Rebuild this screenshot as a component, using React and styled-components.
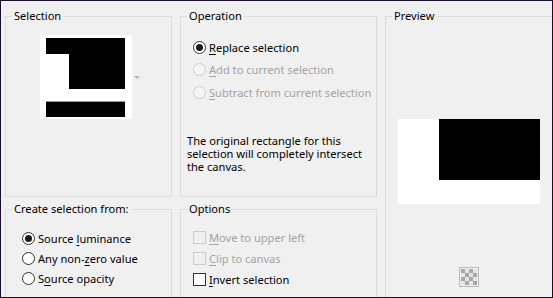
import React from "react";
import styled, { createGlobalStyle } from "styled-components";

const GlobalStyle = createGlobalStyle`
  body {
    margin: 0;
    background: #f0f0f0;
    font-family: "Noto Sans", "Open Sans", sans-serif;
    font-size: 11.1px;
    color: #000;
  }
`;

const Dialog = styled.div`
  width: 553px;
  height: 298px;
  box-sizing: border-box;
  border: 1px solid #1b0e2a;
  background: #f0f0f0;
  overflow: hidden;
  display: grid;
  grid-template-columns: 167px 197px 168px;
  grid-template-rows: 189px 120px;
  column-gap: 8px;
  row-gap: 4px;
  padding: 7px 0 0 4px;
`;

const Group = styled.fieldset`
  margin: 0;
  padding: 0;
  min-width: 0;
  border: 1px solid #dcdcdc;
  box-sizing: border-box;
  grid-column: ${(p) => p.$col};
  grid-row: ${(p) => p.$row};

  legend {
    margin-left: 6px;
    padding: 0 2px;
    line-height: 16px;
    font-size: 11.1px;
  }
`;

const Body = styled.div`
  padding: ${(p) => p.$pad};
`;

const Thumb = styled.div`
  display: flex;
  align-items: center;
  gap: 2px;
`;

const DropArrow = styled.span`
  width: 0;
  height: 0;
  border-left: 3px solid transparent;
  border-right: 3px solid transparent;
  border-top: 3px solid #b4b4b4;
  margin-top: 1px;
`;

const Row = styled.label`
  display: flex;
  align-items: center;
  height: ${(p) => p.$h || 22}px;
  gap: 3px;
  color: ${(p) => (p.$disabled ? "#a3a3a3" : "#000")};
  white-space: nowrap;

  u {
    text-decoration-thickness: 1px;
    text-underline-offset: 2px;
  }
`;

const Radio = styled.span`
  width: 13px;
  height: 13px;
  box-sizing: border-box;
  border-radius: 50%;
  border: 1px solid ${(p) => (p.$disabled ? "#cccccc" : "#333333")};
  background: ${(p) => (p.$disabled ? "#f4f4f4" : "#ffffff")};
  display: flex;
  align-items: center;
  justify-content: center;
  flex: none;

  &::after {
    content: "";
    display: ${(p) => (p.$checked ? "block" : "none")};
    width: 7px;
    height: 7px;
    border-radius: 50%;
    background: #1a1a1a;
  }
`;

const Check = styled.span`
  width: 13px;
  height: 13px;
  box-sizing: border-box;
  border: 1px solid ${(p) => (p.$disabled ? "#cccccc" : "#333333")};
  background: ${(p) => (p.$disabled ? "#f0f0f0" : "#ffffff")};
  flex: none;
`;

const Note = styled.p`
  margin: 30px 0 0 -6px;
  width: 180px;
  line-height: 13px;
`;

const PreviewBox = styled.div`
  display: flex;
  flex-direction: column;
  align-items: center;
`;

const CheckerButton = styled.div`
  margin-top: 63px;
  width: 20px;
  height: 20px;
  box-sizing: border-box;
  border: 1px solid #b8b8b8;
  background: #f0f0f0;
  display: grid;
  grid-template-columns: repeat(4, 4px);
  grid-template-rows: repeat(4, 4px);
  justify-content: center;
  align-content: center;
`;

const Cell = styled.span`
  background: ${(p) => (p.$dark ? "#a8a8a8" : "#e4e4e4")};
`;

const options = [
  { key: "replace", u: "R", post: "eplace selection", checked: true },
  { key: "add", u: "A", post: "dd to current selection", disabled: true },
  { key: "sub", u: "S", post: "ubtract from current selection", disabled: true },
];

const sources = [
  { key: "lum", pre: "Source ", u: "l", post: "uminance", checked: true },
  { key: "nz", pre: "Any non-", u: "z", post: "ero value" },
  { key: "op", pre: "S", u: "o", post: "urce opacity" },
];

const checks = [
  { key: "move", u: "M", post: "ove to upper left", disabled: true },
  { key: "clip", u: "C", post: "lip to canvas", disabled: true },
  { key: "inv", u: "I", post: "nvert selection" },
];

export default function App() {
  return (
    <>
      <GlobalStyle />
      <Dialog>
        <Group $col="1" $row="1">
          <legend>Selection</legend>
          <Body $pad="11px 0 0 34px">
            <Thumb>
              <svg width="92" height="84" viewBox="0 0 92 84">
                <rect width="92" height="84" fill="#fff" />
                <path d="M6 3H85V54H29V19H6Z" fill="#000" />
                <rect x="6" y="66" width="79" height="1" fill="#9a9a9a" />
                <rect x="6" y="67" width="79" height="15" fill="#000" />
              </svg>
              <DropArrow />
            </Thumb>
          </Body>
        </Group>

        <Group $col="2" $row="1">
          <legend>Operation</legend>
          <Body $pad="12px 0 0 12px">
            {options.map((o) => (
              <Row key={o.key} $disabled={o.disabled} $h={22.5}>
                <Radio $checked={o.checked} $disabled={o.disabled} />
                <span>
                  <u>{o.u}</u>
                  {o.post}
                </span>
              </Row>
            ))}
            <Note>
              The original rectangle for this selection will completely
              intersect the canvas.
            </Note>
          </Body>
        </Group>

        <Group $col="3" $row="1 / span 2">
          <legend>Preview</legend>
          <Body $pad="95px 0 0 0">
            <PreviewBox>
              <svg width="142" height="85" viewBox="0 0 142 85">
                <rect width="142" height="85" fill="#fff" />
                <rect x="41" y="0" width="101" height="61" fill="#000" />
              </svg>
              <CheckerButton>
                {Array.from({ length: 16 }).map((_, i) => (
                  <Cell key={i} $dark={(Math.floor(i / 4) + i) % 2 === 0} />
                ))}
              </CheckerButton>
            </PreviewBox>
          </Body>
        </Group>

        <Group $col="1" $row="2">
          <legend>Create selection from:</legend>
          <Body $pad="11px 0 0 16px">
            {sources.map((s) => (
              <Row key={s.key} $h={20}>
                <Radio $checked={s.checked} />
                <span>
                  {s.pre}
                  <u>{s.u}</u>
                  {s.post}
                </span>
              </Row>
            ))}
          </Body>
        </Group>

        <Group $col="2" $row="2">
          <legend>Options</legend>
          <Body $pad="10px 0 0 12px">
            {checks.map((c) => (
              <Row key={c.key} $disabled={c.disabled} $h={21}>
                <Check $disabled={c.disabled} />
                <span>
                  <u>{c.u}</u>
                  {c.post}
                </span>
              </Row>
            ))}
          </Body>
        </Group>
      </Dialog>
    </>
  );
}
